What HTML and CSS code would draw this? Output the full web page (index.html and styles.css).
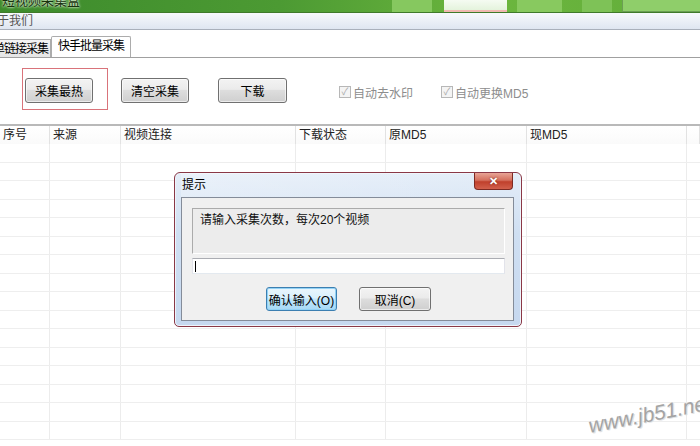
FILE: index.html
```html
<!doctype html>
<html lang="zh-CN">
<head>
	<meta charset="UTF-8" />
	<title>短视频采集盒</title>
<link rel="stylesheet" href="styles.css">
</head>
<body>
	<div id="app">
		<header class="titlebar">
			<span class="title">短视频采集盒</span>
			<div class="skin">
				<i class="seg s1"></i>
				<i class="seg s2"></i>
				<i class="seg s3"></i>
				<i class="seg s4"></i>
				<i class="seg s5"></i>
			</div>
		</header>
		<div class="menubar"><span>关于我们</span></div>
		<nav class="tabs">
			<a href="javascript:;" class="tab">单链接采集</a>
			<a href="javascript:;" class="tab active">快手批量采集</a>
		</nav>
		<div class="toolbar">
			<div class="mark">
				<button class="btn">采集最热</button>
			</div>
			<button class="btn b2">清空采集</button>
			<button class="btn b3">下载</button>
			<label class="chk c1"><i class="box">&#10003;</i>自动去水印</label>
			<label class="chk c2"><i class="box">&#10003;</i>自动更换MD5</label>
		</div>
		<div class="grid">
			<div class="row head">
				<span>序号</span><span>来源</span><span>视频连接</span><span>下载状态</span><span>原MD5</span><span>现MD5</span><span></span>
			</div>
			<div class="row"><span></span><span></span><span></span><span></span><span></span><span></span><span></span></div>
			<div class="row"><span></span><span></span><span></span><span></span><span></span><span></span><span></span></div>
			<div class="row"><span></span><span></span><span></span><span></span><span></span><span></span><span></span></div>
			<div class="row"><span></span><span></span><span></span><span></span><span></span><span></span><span></span></div>
			<div class="row"><span></span><span></span><span></span><span></span><span></span><span></span><span></span></div>
			<div class="row"><span></span><span></span><span></span><span></span><span></span><span></span><span></span></div>
			<div class="row"><span></span><span></span><span></span><span></span><span></span><span></span><span></span></div>
			<div class="row"><span></span><span></span><span></span><span></span><span></span><span></span><span></span></div>
			<div class="row"><span></span><span></span><span></span><span></span><span></span><span></span><span></span></div>
			<div class="row"><span></span><span></span><span></span><span></span><span></span><span></span><span></span></div>
			<div class="row"><span></span><span></span><span></span><span></span><span></span><span></span><span></span></div>
			<div class="row"><span></span><span></span><span></span><span></span><span></span><span></span><span></span></div>
			<div class="row"><span></span><span></span><span></span><span></span><span></span><span></span><span></span></div>
			<div class="row"><span></span><span></span><span></span><span></span><span></span><span></span><span></span></div>
			<div class="row"><span></span><span></span><span></span><span></span><span></span><span></span><span></span></div>
			<div class="row"><span></span><span></span><span></span><span></span><span></span><span></span><span></span></div>
		</div>

		<div class="dialog">
			<div class="dlg-title">
				<span>提示</span>
				<a href="javascript:;" class="close">&#10005;</a>
			</div>
			<div class="dlg-body">
				<p class="msg">请输入采集次数，每次20个视频</p>
				<div class="input"><i class="caret"></i></div>
				<div class="dlg-btns">
					<button class="btn ok">确认输入(O)</button>
					<button class="btn">取消(C)</button>
				</div>
			</div>
		</div>

		<div class="watermark">www.jb51.net</div>
	</div>
</body>
</html>
```

FILE: styles.css
```css
*{
	margin: 0;
	padding: 0;
	box-sizing: border-box;
}
body{
	background: #fff;
	font-family: "Liberation Sans", "Noto Sans CJK SC", sans-serif;
	font-size: 12px;
	color: #000;
}
#app{
	position: relative;
	width: 700px;
	height: 446px;
	overflow: hidden;
	background: #fff;
}

/* title bar */
.titlebar{
	height: 13px;
	display: flex;
	overflow: hidden;
	background: linear-gradient(90deg, #3d8b2c 0%, #4c9a33 40%, #6cb63e 70%, #62ad3a 100%);
	border-bottom: 1px solid #3f7a2a;
}
.title{
	display: block;
	margin: -8px 0 0 2px;
	font-size: 13px;
	line-height: 18px;
	color: #17320d;
	text-shadow: 0 0 2px #e8f5df, 0 0 3px #e8f5df;
	white-space: nowrap;
}
.skin{
	display: flex;
	margin-left: 312px;
	height: 12px;
}
.seg{
	display: block;
	height: 12px;
}
.s1{
	width: 40px;
	background: #86c85f;
	margin-right: 12px;
}
.s2{
	width: 63px;
	background: linear-gradient(#f5fbf2, #e4f3dc);
	border-bottom: 2px solid #f0b8b0;
	margin-right: 10px;
}
.s3{
	width: 45px;
	background: #88c95f;
	margin-right: 20px;
}
.s4{
	width: 30px;
	background: #7ec257;
	margin-right: 10px;
}
.s5{
	width: 85px;
	background: #8fce6a;
	border: 1px solid #6b9f54;
	border-top: 0;
}

/* menu */
.menubar{
	height: 17px;
	background: linear-gradient(#f7f9fc, #dfe6f1);
	border-bottom: 1px solid #a9b0bb;
	color: #555;
	line-height: 16px;
	overflow: hidden;
}
.menubar span{
	display: block;
	margin-left: -15px;
}

/* tabs */
.tabs{
	height: 28px;
	display: flex;
	align-items: flex-end;
	border-bottom: 1px solid #a0a0a0;
	overflow: hidden;
}
.tab{
	display: block;
	height: 20px;
	line-height: 19px;
	color: #000;
	text-decoration: none;
	font-size: 12px;
	letter-spacing: -1px;
	white-space: nowrap;
	border: 1px solid #acacac;
	border-bottom: 0;
	background: linear-gradient(#f4f4f4, #e5e5e5);
}
.tab:first-child{
	margin-left: -8px;
	width: 59px;
	height: 18px;
	line-height: 18px;
	padding-left: 1px;
	border-left: 0;
}
.tab.active{
	width: 80px;
	background: #fff;
	height: 21px;
	padding-left: 6px;
	border-radius: 2px 2px 0 0;
}

/* toolbar */
.toolbar{
	height: 66px;
	display: flex;
	align-items: flex-start;
	padding: 10px 0 0 22px;
}
.mark{
	width: 86px;
	height: 42px;
	border: 1px solid #d9737a;
	padding: 9px 0 0 2px;
}
.btn{
	display: block;
	width: 68px;
	height: 25px;
	font-family: "Liberation Sans", "Noto Sans CJK SC", sans-serif;
	font-size: 12px;
	color: #000;
	border: 1px solid #707070;
	border-radius: 3px;
	background: linear-gradient(#f3f3f3 0%, #ebebeb 45%, #dddddd 50%, #cfcfcf 100%);
	box-shadow: inset 0 0 0 1px rgba(255,255,255,.6);
}
.b2{
	margin: 10px 0 0 13px;
}
.b3{
	margin: 10px 0 0 29px;
	width: 69px;
}
.chk{
	display: flex;
	align-items: center;
	margin-top: 16px;
	color: #8d8d8d;
	height: 16px;
}
.c1{
	margin-left: 52px;
}
.c2{
	margin-left: 28px;
}
.box{
	display: block;
	width: 12px;
	height: 12px;
	margin-right: 2px;
	border: 1px solid #b7b7b7;
	background: #f4f4f4;
	color: #a9a9a9;
	font-style: normal;
	font-size: 10px;
	line-height: 10px;
	text-align: center;
}

/* list */
.row{
	display: grid;
	grid-template-columns: 50px 71px 175px 90px 141px 160px 13px;
	height: 18.5px;
	border-bottom: 1px solid #eeeeee;
}
.row span{
	display: block;
	border-right: 1px solid #ececec;
	padding-left: 3px;
}
.row span:last-child{
	border-right: 0;
}
.row.head{
	height: 20px;
	border-top: 2px solid #b9b9b9;
	border-bottom: 0;
	background: linear-gradient(#fff, #fafafa);
	line-height: 18px;
	color: #222;
}
.row.head span{
	border-right: 1px solid #e2e2e2;
}

/* dialog */
.dialog{
	position: absolute;
	left: 174px;
	top: 172px;
	width: 348px;
	height: 155px;
	border: 1px solid #8a3846;
	border-radius: 6px 6px 5px 5px;
	background: linear-gradient(#e4edf8, #cfdff2 40%, #c6d8ef);
	box-shadow: inset 0 0 0 1px #eef4fb;
	padding: 0 7px 6px 6px;
}
.dlg-title{
	position: relative;
	height: 24px;
	line-height: 24px;
	padding-left: 1px;
	color: #000;
	background: linear-gradient(90deg, rgba(255,255,255,.25), rgba(255,255,255,0));
}
.close{
	position: absolute;
	top: 0;
	right: 1px;
	width: 39px;
	height: 17px;
	line-height: 16px;
	text-align: center;
	color: #fff;
	font-size: 11px;
	font-weight: bold;
	text-decoration: none;
	border: 1px solid #7d2a22;
	border-top: 0;
	border-radius: 0 0 4px 4px;
	background: linear-gradient(#e8a496 0%, #d4705e 45%, #c0402c 55%, #d2604c 100%);
	text-shadow: 0 0 2px #6e1d12;
}
.dlg-body{
	height: 124px;
	background: #f0f0f0;
	border: 1px solid #848c99;
	padding: 10px 8px 0 10px;
}
.msg{
	height: 46px;
	border: 1px solid #ababab;
	border-right-color: #fff;
	border-bottom-color: #fff;
	background: #ececec;
	padding: 3px 0 0 7px;
	line-height: 16px;
	color: #111;
}
.input{
	margin-top: 4px;
	height: 16px;
	background: #fff;
	border: 1px solid #abadb3;
	border-left-color: #e2e3ea;
	border-right-color: #e2e3ea;
	border-bottom-color: #e3e9ef;
	padding: 2px 0 0 2px;
}
.caret{
	display: block;
	width: 1px;
	height: 11px;
	background: #000;
}
.dlg-btns{
	display: flex;
	justify-content: center;
	gap: 22px;
	margin-top: 13px;
}
.dlg-btns .btn{
	width: 72px;
	height: 24px;
	font-size: 12px;
}
.dlg-btns .ok{
	width: 71px;
	border-color: #3c7fb1;
	background: linear-gradient(#eaf6fd 0%, #d9f0fc 45%, #bee6fd 50%, #a7d9f5 100%);
	box-shadow: inset 0 0 0 1px #93d2f5;
}

/* watermark */
.watermark{
	position: absolute;
	left: 591px;
	top: 414px;
	font-family: "Liberation Sans", sans-serif;
	font-style: italic;
	font-size: 21px;
	color: #a4a4a4;
	white-space: nowrap;
	transform: rotate(-11deg);
	transform-origin: left bottom;
	text-shadow: 1px 1px 0 #e2e2e2;
}
```
